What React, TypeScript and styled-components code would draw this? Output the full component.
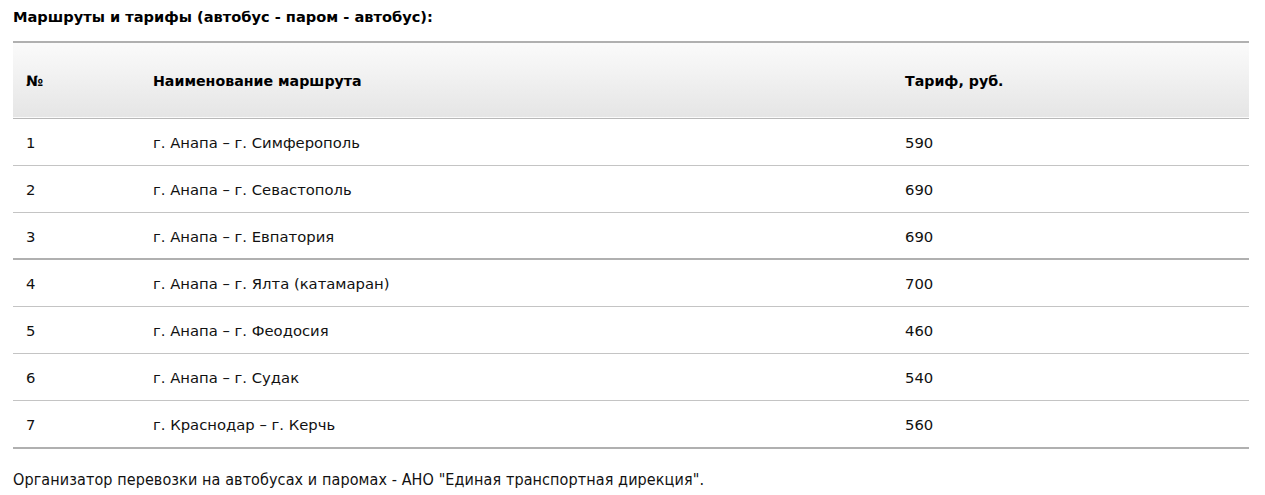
import styled, { createGlobalStyle } from 'styled-components'

const GlobalStyle = createGlobalStyle`
  body {
    margin: 0;
    background: #ffffff;
    color: #111111;
    font-family: "DejaVu Sans", Verdana, sans-serif;
    font-size: 15px;
  }
`;

const Page = styled.section`
  padding: 9px 13px 0 13px;
  width: 1236px;
`;

const Title = styled.h3`
  margin: 0 0 16px 0;
  font-size: 14.6px;
  font-weight: bold;
  line-height: 16px;
  color: #000;
`;

const Table = styled.table`
  width: 1236px;
  border-collapse: collapse;
  table-layout: fixed;
  border-top: 2px solid #b0b0b0;
  border-bottom: 2px solid #b0b0b0;
`;

const HeadRow = styled.tr`
  background: linear-gradient(to bottom, #fbfbfb 0%, #e5e5e5 100%);
  border-bottom: 1px solid #b8b8b8;
`;

const HeadCell = styled.th<{ $w: number }>`
  width: ${(p) => p.$w}px;
  height: 76px;
  padding: 1px 13px 0 13px;
  text-align: left;
  font-size: 14.2px;
  font-weight: bold;
  color: #000;
  box-sizing: border-box;
`;

const Row = styled.tr<{ $thick?: boolean }>`
  border-bottom: ${(p) => (p.$thick ? '2px solid #b0b0b0' : '1px solid #c4c4c4')};
  &:last-child {
    border-bottom: none;
  }
  &:last-child td {
    height: 48px;
  }
`;

const Cell = styled.td`
  height: 47px;
  padding: 2px 13px 0 13px;
  font-size: 14.8px;
  color: #111;
  box-sizing: border-box;
`;

const Note = styled.p`
  margin: 21px 0 0 0;
  font-family: "DejaVu Sans Condensed", "DejaVu Sans", sans-serif;
  font-size: 16px;
  letter-spacing: 0.1px;
  color: #111;
`;

const routes = [
  { n: 1, name: 'г. Анапа – г. Симферополь', price: 590 },
  { n: 2, name: 'г. Анапа – г. Севастополь', price: 690 },
  { n: 3, name: 'г. Анапа – г. Евпатория', price: 690, thick: true },
  { n: 4, name: 'г. Анапа – г. Ялта (катамаран)', price: 700 },
  { n: 5, name: 'г. Анапа – г. Феодосия', price: 460 },
  { n: 6, name: 'г. Анапа – г. Судак', price: 540 },
  { n: 7, name: 'г. Краснодар – г. Керчь', price: 560 },
];

const App = () => {
  return (
    <>
      <GlobalStyle />
      <Page>
        <Title>Маршруты и тарифы (автобус - паром - автобус):</Title>
        <Table>
          <thead>
            <HeadRow>
              <HeadCell $w={127}>№</HeadCell>
              <HeadCell $w={752}>Наименование маршрута</HeadCell>
              <HeadCell $w={357}>Тариф, руб.</HeadCell>
            </HeadRow>
          </thead>
          <tbody>
            {routes.map((r) => (
              <Row key={r.n} $thick={r.thick}>
                <Cell>{r.n}</Cell>
                <Cell>{r.name}</Cell>
                <Cell>{r.price}</Cell>
              </Row>
            ))}
          </tbody>
        </Table>
        <Note>
          Организатор перевозки на автобусах и паромах - АНО "Единая транспортная дирекция".
        </Note>
      </Page>
    </>
  )
}

export default App
